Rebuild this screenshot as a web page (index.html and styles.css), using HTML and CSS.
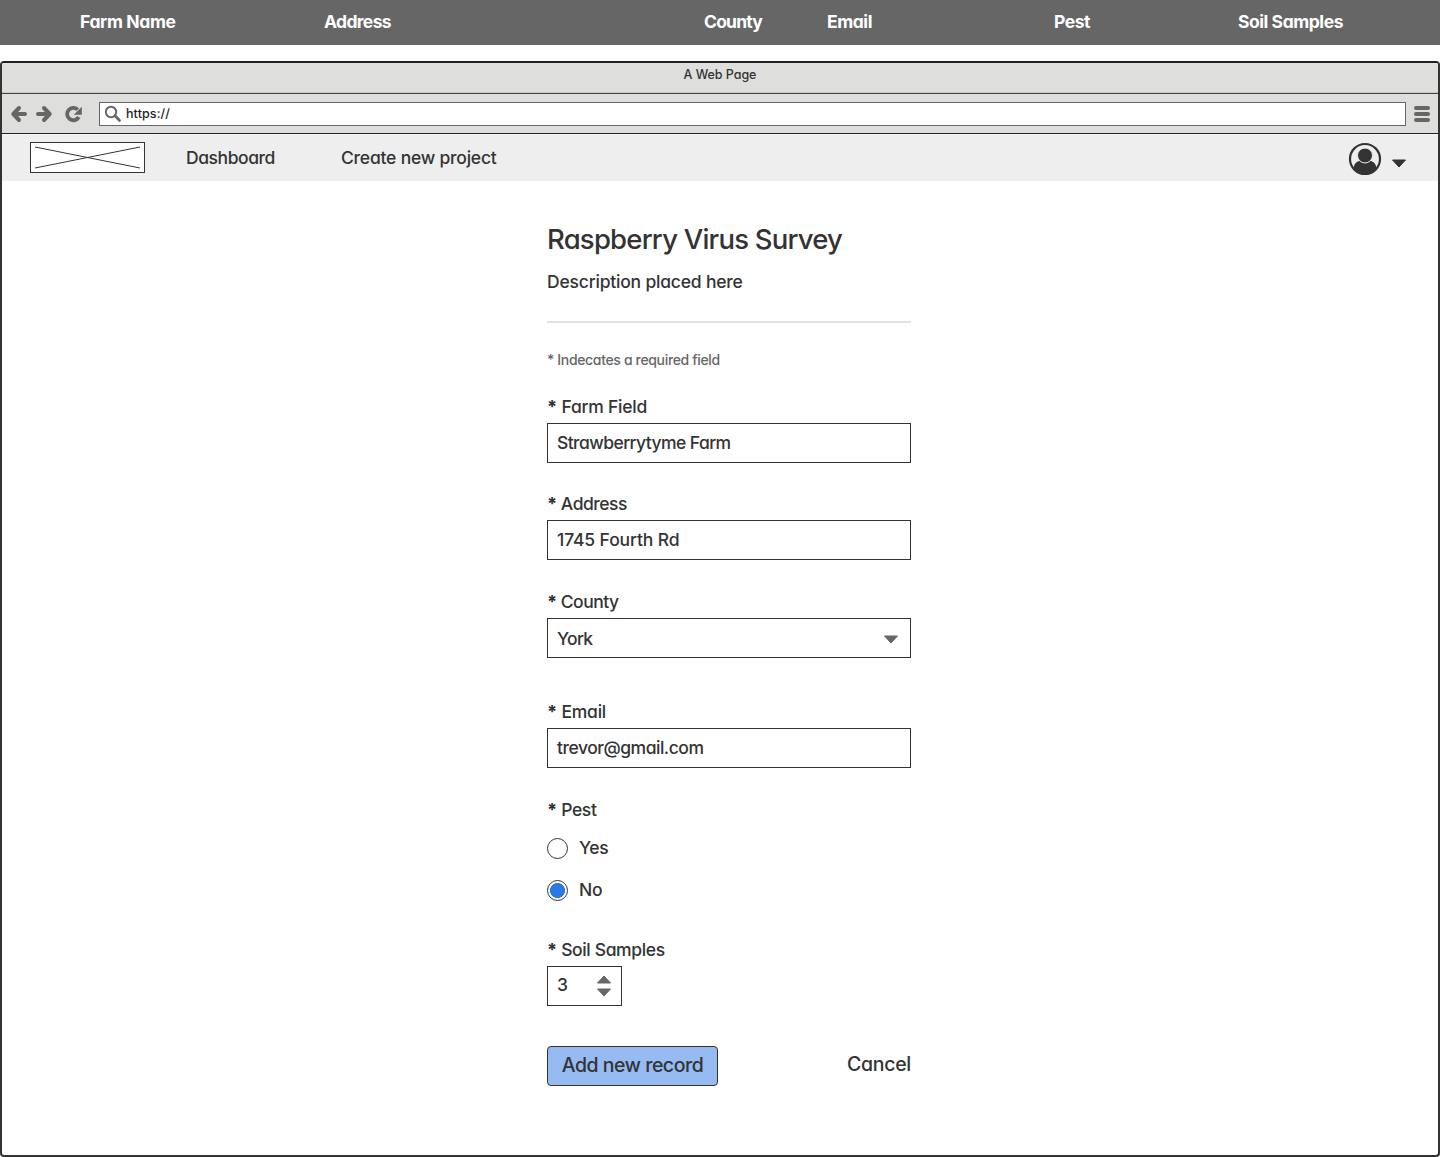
FILE: index.html
```html
<!DOCTYPE html>
<html lang="en">
<head>
<meta charset="utf-8">
<title>Raspberry Virus Survey</title>
<link rel="stylesheet" href="styles.css">
</head>
<body>
<header class="columns">
  <span class="t-farm">Farm Name</span>
  <span class="t-address">Address</span>
  <span class="t-county">County</span>
  <span class="t-email">Email</span>
  <span class="t-pest">Pest</span>
  <span class="t-soil">Soil Samples</span>
</header>
<main class="window">
  <div class="titlebar"><span class="t-title">A Web Page</span></div>
  <div class="toolbar">
    <svg class="nav-icons" width="84" height="24" viewBox="0 0 84 24" fill="none" stroke="#666" stroke-width="4" stroke-linecap="round" stroke-linejoin="round">
      <path d="M17 6l-5.700 6 5.700 6M12 12h11M42 6l5.700 6-5.700 6M47 12H36"/>
      <path d="M75.700 7.600A6.200 6.200 0 1 0 76.800 15" stroke-width="3.800" stroke-linecap="butt"/>
      <path d="M79.800 4.800v7.900h-8z" fill="#666" stroke="none"/>
    </svg>
    <div class="url">
      <svg width="18" height="18" viewBox="0 0 18 18" fill="none" stroke="#666"><circle cx="6" cy="7" r="5.200" stroke-width="2"/><path d="M10.500 11.200l4 4.200" stroke-width="2.800" stroke-linecap="round"/></svg>
      <span class="t-url">https://</span>
    </div>
    <svg class="burger" width="16" height="16" viewBox="0 0 16 16" stroke="#666" stroke-width="4" stroke-linecap="round"><path d="M2 2h12M2 8h12M2 14h12"/></svg>
  </div>
  <nav class="menu">
    <svg class="logo" width="115" height="31" viewBox="0 0 115 31" fill="#fff" stroke="#333"><rect x=".5" y=".5" width="114" height="30"/><path d="M5 5l105 21M5 26L110 5"/></svg>
    <a class="t-dash">Dashboard</a>
    <a class="t-create">Create new project</a>
    <svg class="avatar" width="34" height="34" viewBox="0 0 34 34"><circle cx="17" cy="17" r="15" fill="#eee" stroke="#333" stroke-width="2.200"/><path d="M5.500 26C6.500 21 9 19 12 19h10c3 0 5.500 2 6.500 7A14.800 14.800 0 0 1 5.500 26z" fill="#333"/><circle cx="17" cy="13.500" r="7.500" fill="#333" stroke="#eee" stroke-width="1"/></svg>
    <svg class="caret" width="16" height="9" viewBox="0 0 16 9"><path d="M1.500 1h13L8 8z" fill="#333" stroke="#333" stroke-linejoin="round"/></svg>
  </nav>
  <form class="survey">
    <h1 class="t-h1">Raspberry Virus Survey</h1>
    <p class="description t-desc">Description placed here</p>
    <hr>
    <p class="note t-note">* Indecates a required field</p>
    <div class="field farm"><label class="t-l1"><b>*</b> Farm Field</label><div class="box"><span class="t-v1">Strawberrytyme Farm</span></div></div>
    <div class="field"><label class="t-l2"><b>*</b> Address</label><div class="box"><span class="t-v2">1745 Fourth Rd</span></div></div>
    <div class="field select"><label class="t-l3"><b>*</b> County</label><div class="box"><span class="t-v3">York</span>
      <svg width="16" height="9" viewBox="0 0 16 9"><path d="M1.500 1h13L8 8z" fill="#666" stroke="#666" stroke-linejoin="round"/></svg></div></div>
    <div class="field"><label class="t-l4"><b>*</b> Email</label><div class="box"><span class="t-v4">trevor@gmail.com</span></div></div>
    <div class="field pest"><label class="t-l5"><b>*</b> Pest</label>
      <div class="option"><i class="radio"></i><span class="t-yes">Yes</span></div>
      <div class="option"><i class="radio checked"></i><span class="t-no">No</span></div></div>
    <div class="field samples"><label class="t-l6"><b>*</b> Soil Samples</label><div class="box"><span class="t-v6">3</span>
      <svg width="16" height="22" viewBox="0 0 16 22" fill="#666" stroke="#666" stroke-linejoin="round"><path d="M1.500 8h13L8 1zM1.500 14h13L8 21z"/></svg></div></div>
    <div class="actions"><button type="button"><span class="t-add">Add new record</span></button><a class="cancel t-cancel">Cancel</a></div>
  </form>
</main>
</body>
</html>
```

FILE: styles.css
```css
* { box-sizing: border-box; }
body { margin: 0; height: 1157px; display: flex; flex-direction: column; gap: 16px; background: #fff; color: #333; font: 500 17.5px/24px Inter, sans-serif; font-feature-settings: "cv11"; }
h1, p, hr { margin: 0; }
.columns { height: 45px; padding: 10px 0 0 80px; display: grid; grid-template-columns: 244px 380px 123px 227px 184px 1fr; background: #666; color: #fff; font-weight: 700; }
.window { flex: 1; border: 2px solid #333; border-top-color: #231f20; border-radius: 4px; overflow: hidden; }
.titlebar { height: 31px; background: #dededc; border-bottom: 1px solid #444; box-shadow: inset 0 -1px #c8c8c6; text-align: center; font-size: 12.5px; font-weight: 450; }
.toolbar { height: 40px; display: flex; align-items: center; background: #dededc; border-bottom: 1px solid #231f20; }
.url { flex: 1; height: 24px; margin: 0 8px 0 13px; padding-left: 5px; display: flex; align-items: center; gap: 3px; border: 1px solid #666; background: #fff; font-size: 12.5px; color: #222; }
.url span { padding-top: 1px; }
.burger { margin-right: 8px; }
.menu { height: 47px; display: flex; align-items: center; padding: 0 31px 0 28px; background: #eee; box-shadow: inset 0 1px #f8f8f8; }
.t-dash { margin-left: 41px; }
.t-create { margin-left: 66px; }
.avatar { margin: 2px 0 0 auto; }
.caret { margin: 12px 0 0 9px; }
.survey { width: 364px; margin: 0 0 0 545px; padding-top: 38px; }
h1 { font-size: 27.5px; line-height: 40px; font-weight: 500; }
.description { margin-top: 11px; }
hr { height: 2px; margin-top: 27px; border: 0; background: #e3e3e3; }
.note { margin: 25px 0 23px; color: #666; font-size: 14px; }
.field { margin-bottom: 30px; }
.field label { display: block; margin-bottom: 4px; white-space: nowrap; }
.field b { font-weight: 800; }
.farm { margin-bottom: 29px; }
.box { height: 40px; padding: 0 11px 0 9px; display: flex; align-items: center; justify-content: space-between; border: 1px solid #333; }
.select { margin-bottom: 42px; }
.select .box { padding-top: 2px; }
.option { display: flex; align-items: center; height: 21px; margin-top: 16px; gap: 11px; }
.option span { padding-bottom: 2px; }
.option + .option { margin-top: 21px; }
.radio { width: 21px; height: 21px; border: 1px solid #333; border-radius: 50%; }
.checked { background: radial-gradient(circle, #2c78e4 7.2px, #fff 7.8px); }
.pest { margin-bottom: 37px; }
.samples { margin-bottom: 40px; }
.samples .box { width: 75px; padding-right: 9px; }
.samples .box span { padding-bottom: 2px; }
.actions { display: flex; justify-content: space-between; font-size: 19.5px; }
.actions button { width: 171px; height: 40px; padding: 0 0 2px; border: 1px solid #333; border-radius: 4px; background: #95bbf2; color: #333; font: inherit; font-feature-settings: inherit; }
.cancel { line-height: 36px; }

/* tracking per text */
.t-farm { letter-spacing: -.38px; }
.t-address { letter-spacing: -.64px; }
.t-county { letter-spacing: -.8px; }
.t-email { letter-spacing: -.42px; }
.t-pest { letter-spacing: -.46px; }
.t-soil { letter-spacing: -.44px; }
.t-title { letter-spacing: -.05px; }
.t-url { letter-spacing: .1px; }
.t-dash { letter-spacing: -.43px; }
.t-create { letter-spacing: -.21px; }
.t-h1 { letter-spacing: -.79px; }
.t-desc { letter-spacing: -.2px; }
.t-note { letter-spacing: -.34px; }
.t-l1 { letter-spacing: -.22px; }
.t-v1 { letter-spacing: -.57px; }
.t-l2 { letter-spacing: -.5px; }
.t-v2 { letter-spacing: -.12px; }
.t-l3 { letter-spacing: -.53px; }
.t-v3 { letter-spacing: -.64px; }
.t-l4 { letter-spacing: -.22px; }
.t-v4 { letter-spacing: -.48px; }
.t-l5 { letter-spacing: -.35px; }
.t-yes { letter-spacing: -.3px; }
.t-no { letter-spacing: -.2px; }
.t-l6 { letter-spacing: -.36px; }
.t-add { letter-spacing: -.47px; }
.t-cancel { letter-spacing: -.28px; }
```
